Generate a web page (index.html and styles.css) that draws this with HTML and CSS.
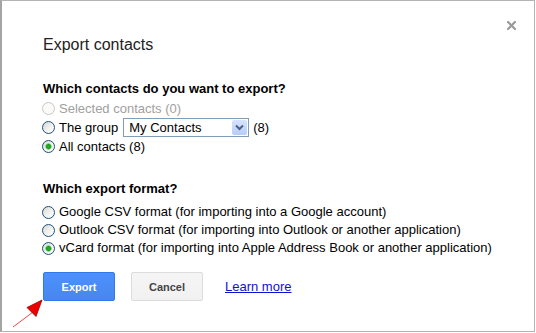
FILE: index.html
```html
<!DOCTYPE html>
<html>
<head>
    <title>Export contacts</title>
    <meta charset="UTF-8">
    <link rel="stylesheet" href="styles.css">
</head>
<body>
    <div class="dialog">
        <button class="close" title="Close">
            <svg width="9" height="9" viewBox="0 0 9 9">
                <path d="M1 1 L8 8 M8 1 L1 8" stroke="#9a9a9a" stroke-width="2.2" stroke-linecap="square"/>
            </svg>
        </button>

        <h2 class="title">Export contacts</h2>

        <div class="section">
            <div class="section-title">Which contacts do you want to export?</div>
            <label class="option disabled">
                <input type="radio" name="who" disabled>
                <span>Selected contacts (0)</span>
            </label>
            <label class="option">
                <input type="radio" name="who">
                <span>The group</span>
                <span class="select">
                    <span class="select-text">My Contacts</span>
                    <span class="select-btn">
                        <svg width="9" height="7" viewBox="0 0 9 7">
                            <path d="M1 1.5 L4.5 5 L8 1.5" fill="none" stroke="#4d6185" stroke-width="2"/>
                        </svg>
                    </span>
                </span>
                <span>(8)</span>
            </label>
            <label class="option">
                <input type="radio" name="who" checked>
                <span>All contacts (8)</span>
            </label>
        </div>

        <div class="section formats">
            <div class="section-title">Which export format?</div>
            <label class="option">
                <input type="radio" name="format">
                <span>Google CSV format (for importing into a Google account)</span>
            </label>
            <label class="option">
                <input type="radio" name="format">
                <span>Outlook CSV format (for importing into Outlook or another application)</span>
            </label>
            <label class="option">
                <input type="radio" name="format" checked>
                <span>vCard format (for importing into Apple Address Book or another application)</span>
            </label>
        </div>

        <div class="buttons">
            <button class="btn btn-primary">Export</button>
            <button class="btn">Cancel</button>
            <a href="#" class="learn-more">Learn more</a>
        </div>
    </div>

    <svg class="pointer" width="50" height="36" viewBox="0 0 50 36">
        <line x1="13" y1="32" x2="33" y2="17" stroke="#f04848" stroke-width="1"/>
        <polygon points="42,5 27,12.5 36,21.5" fill="#ee0000" stroke="#990000" stroke-width="0.8"/>
    </svg>
</body>
</html>
```

FILE: styles.css
```css
body {
    margin: 0;
    font-family: "Liberation Sans", Arial, sans-serif;
    font-size: 13px;
    color: #000;
    background: #fff;
}
.dialog {
    position: relative;
    box-sizing: border-box;
    width: 535px;
    height: 332px;
    border: 1px solid #b4b4b4;
    border-left: 2px solid #a4a4a4;
    padding: 34px 0 0 41px;
}
.close {
    position: absolute;
    top: 19px;
    right: 17px;
    width: 11px;
    height: 11px;
    padding: 1px;
    border: none;
    background: none;
    cursor: pointer;
}
.close svg {
    display: block;
}
.title {
    margin: 0;
    font-size: 16px;
    font-weight: normal;
    line-height: 20px;
    color: #222;
}
.section {
    margin-top: 24px;
}
.section-title {
    font-weight: bold;
    line-height: 19px;
    margin-bottom: 1px;
}
.option {
    display: flex;
    align-items: center;
    height: 19px;
    line-height: 19px;
    margin-left: -1px;
    cursor: pointer;
}
.option.disabled {
    color: #a0a0a0;
}
.option input {
    appearance: none;
    -webkit-appearance: none;
    box-sizing: border-box;
    width: 13px;
    height: 13px;
    margin: 0 4px 0 0;
    border: 1px solid #1c5180;
    border-radius: 50%;
    background: linear-gradient(135deg, #d8d8d0, #f4f4f2 60%, #fff);
    flex: none;
}
.option input:checked {
    background:
        radial-gradient(circle, #2bb52b 0, #1a9a1a 2px, #8fd88f 3px, transparent 3.5px),
        linear-gradient(135deg, #d8d8d0, #f4f4f2 60%, #fff);
}
.option input:disabled {
    border-color: #c8c8c0;
    background: #fafaf8;
}
.select {
    display: flex;
    align-items: center;
    box-sizing: border-box;
    width: 126px;
    height: 19px;
    margin: 0 4px 0 5px;
    border: 1px solid #7f9db9;
    background: #fff;
}
.select-text {
    flex: 1;
    padding-left: 5px;
    line-height: 17px;
}
.select-btn {
    display: flex;
    align-items: center;
    justify-content: center;
    width: 15px;
    height: 15px;
    margin-right: 1px;
    border-radius: 2px;
    background: linear-gradient(#d6e3fd, #b7cdfa);
}
.formats {
    margin-top: 23px;
}
.formats .section-title {
    margin-bottom: 5px;
}
.formats .option {
    height: 18px;
    line-height: 18px;
}
.buttons {
    display: flex;
    align-items: center;
    margin-top: 15px;
}
.btn {
    box-sizing: border-box;
    width: 72px;
    height: 29px;
    margin-right: 16px;
    border: 1px solid #dcdcdc;
    border-radius: 2px;
    background: linear-gradient(#f5f5f5, #f1f1f1);
    color: #444;
    font-family: "Liberation Sans", Arial, sans-serif;
    font-size: 11px;
    font-weight: bold;
    cursor: pointer;
}
.btn-primary {
    border-color: #3079ed;
    background: linear-gradient(#4d90fe, #4787ed);
    color: #fff;
}
.learn-more {
    margin-left: 6px;
    color: #1111cc;
    line-height: 18px;
}
.pointer {
    position: absolute;
    left: 0;
    top: 295px;
}
```
